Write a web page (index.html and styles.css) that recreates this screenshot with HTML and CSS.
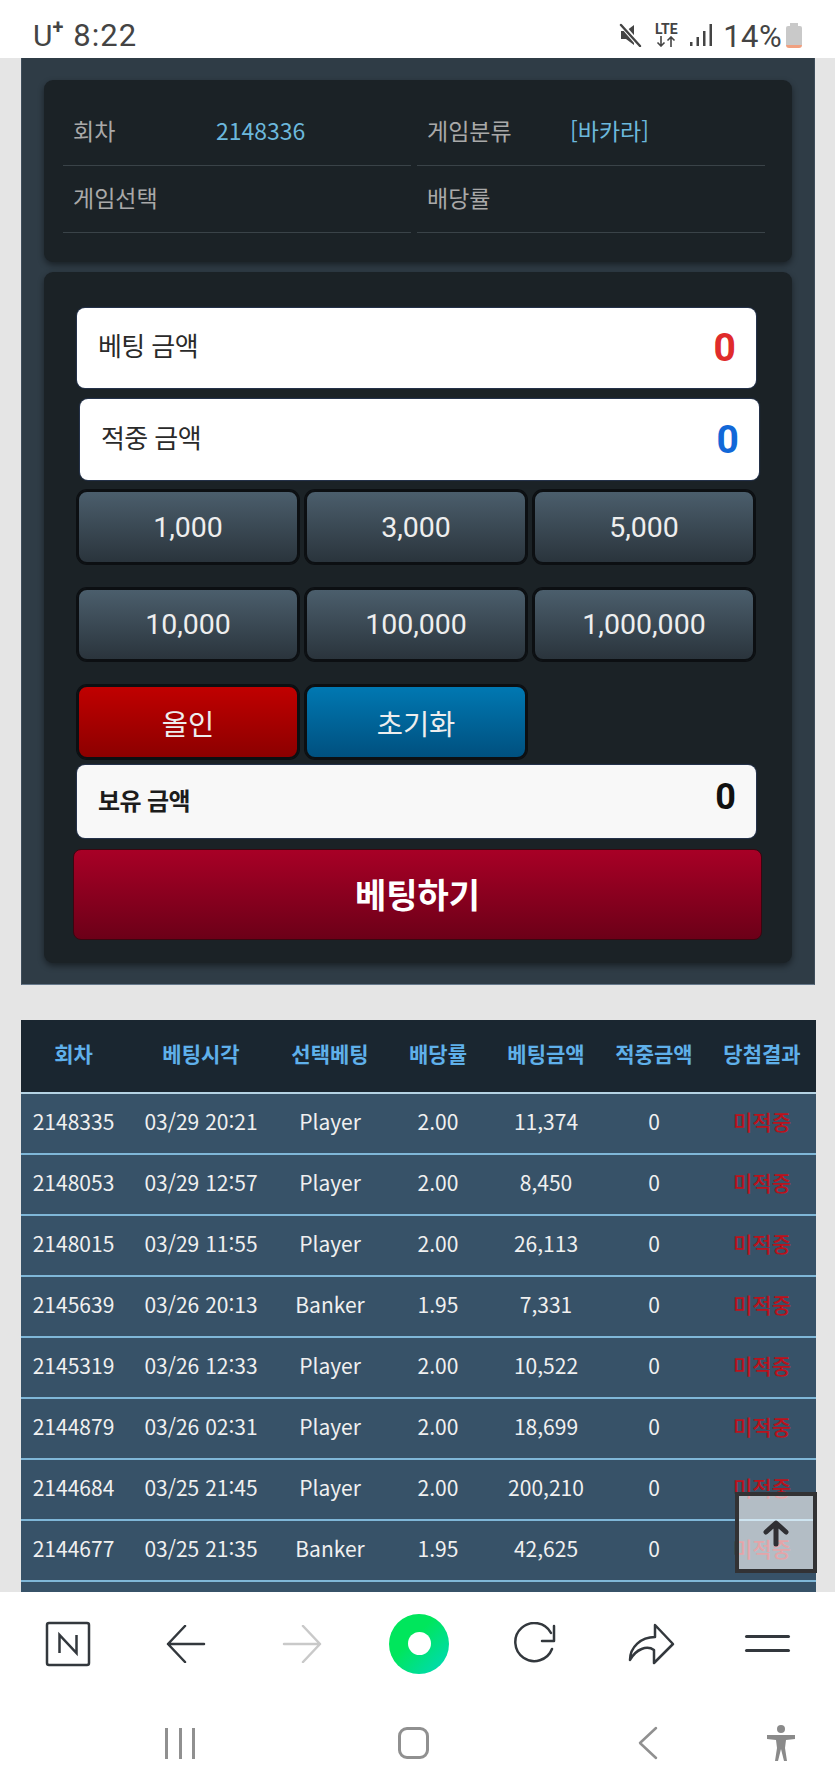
FILE: index.html
```html
<!DOCTYPE html>
<html lang="ko">
<head>
  <meta charset="UTF-8">
  <meta name="viewport" content="width=device-width, initial-scale=1.0">
  <title>베팅</title>
  <link rel="stylesheet" href="styles.css">
</head>
<body>

  <div class="status-bar">
    <div class="status-left">
      <span class="carrier">U<sup>+</sup></span>
      <span class="clock">8:22</span>
    </div>
    <div class="status-right">
      <svg class="ico-mute" width="24" height="24" viewBox="0 0 24 24">
        <path d="M3 8h5l8 -6v20l-8 -6H3z" fill="#444"/>
        <path d="M3 1l19 22" stroke="#fff" stroke-width="5"/>
        <path d="M3 2l19 21" stroke="#444" stroke-width="2.4" stroke-linecap="round"/>
      </svg>
      <div class="lte">
        <span>LTE</span>
        <svg width="20" height="11" viewBox="0 0 20 11" fill="none" stroke="#444" stroke-width="1.6">
          <path d="M5 0v10M1.500 6.500L5 10l3.500 -3.500"/>
          <path d="M15 11V1M11.500 4.500L15 1l3.500 3.500"/>
        </svg>
      </div>
      <svg class="ico-signal" width="22" height="24" viewBox="0 0 22 24" fill="#444">
        <rect x="0" y="19" width="2.500" height="4"/>
        <rect x="6.500" y="14" width="2.500" height="9"/>
        <rect x="13" y="8" width="2.500" height="15"/>
        <rect x="19.500" y="1" width="2.500" height="22"/>
      </svg>
      <span class="battery-text">14%</span>
      <div class="battery"><div class="battery-cap"></div><div class="battery-body"></div></div>
    </div>
  </div>

  <div class="page">
    <div class="panel">
      <div class="box info-box">
        <div class="info-row">
          <div class="info-cell"><span class="info-label">회차</span><span class="info-value">2148336</span></div>
          <div class="info-cell"><span class="info-label">게임분류</span><span class="info-value">[바카라]</span></div>
        </div>
        <div class="info-row">
          <div class="info-cell"><span class="info-label">게임선택</span></div>
          <div class="info-cell"><span class="info-label">배당률</span></div>
        </div>
      </div>

      <div class="box bet-box">
        <div class="amount">
          <span class="amount-label">베팅 금액</span>
          <span class="amount-num red">0</span>
        </div>
        <div class="amount amount-second">
          <span class="amount-label">적중 금액</span>
          <span class="amount-num blue">0</span>
        </div>

        <div class="btn-grid">
          <button class="btn">1,000</button>
          <button class="btn">3,000</button>
          <button class="btn">5,000</button>
        </div>
        <div class="btn-grid btn-grid-mid">
          <button class="btn btn-short">10,000</button>
          <button class="btn btn-short">100,000</button>
          <button class="btn btn-short">1,000,000</button>
        </div>
        <div class="btn-grid btn-grid-last">
          <button class="btn btn-red">올인</button>
          <button class="btn btn-blue">초기화</button>
        </div>

        <div class="amount amount-hold">
          <span class="hold-label">보유 금액</span>
          <span class="hold-num">0</span>
        </div>

        <button class="bet-btn">베팅하기</button>
      </div>
    </div>

    <table class="history">
      <colgroup>
        <col class="col-round">
        <col class="col-time">
        <col class="col-std">
        <col class="col-std">
        <col class="col-std">
        <col class="col-std">
        <col class="col-std">
      </colgroup>
      <thead>
        <tr>
          <th>회차</th><th>베팅시각</th><th>선택베팅</th><th>배당률</th><th>베팅금액</th><th>적중금액</th><th>당첨결과</th>
        </tr>
      </thead>
      <tbody>
        <tr><td>2148335</td><td>03/29 20:21</td><td>Player</td><td>2.00</td><td>11,374</td><td>0</td><td class="miss">미적중</td></tr>
        <tr><td>2148053</td><td>03/29 12:57</td><td>Player</td><td>2.00</td><td>8,450</td><td>0</td><td class="miss">미적중</td></tr>
        <tr><td>2148015</td><td>03/29 11:55</td><td>Player</td><td>2.00</td><td>26,113</td><td>0</td><td class="miss">미적중</td></tr>
        <tr><td>2145639</td><td>03/26 20:13</td><td>Banker</td><td>1.95</td><td>7,331</td><td>0</td><td class="miss">미적중</td></tr>
        <tr><td>2145319</td><td>03/26 12:33</td><td>Player</td><td>2.00</td><td>10,522</td><td>0</td><td class="miss">미적중</td></tr>
        <tr><td>2144879</td><td>03/26 02:31</td><td>Player</td><td>2.00</td><td>18,699</td><td>0</td><td class="miss">미적중</td></tr>
        <tr><td>2144684</td><td>03/25 21:45</td><td>Player</td><td>2.00</td><td>200,210</td><td>0</td><td class="miss">미적중</td></tr>
        <tr><td>2144677</td><td>03/25 21:35</td><td>Banker</td><td>1.95</td><td>42,625</td><td>0</td><td class="miss">미적중</td></tr>
        <tr><td colspan="7"></td></tr>
      </tbody>
    </table>

    <div class="top-btn">
      <svg width="28" height="28" viewBox="0 0 28 28" fill="none" stroke="#2f2f33" stroke-width="5" stroke-linecap="round" stroke-linejoin="round">
        <path d="M14 25V5M4 13l10 -9 10 9"/>
      </svg>
    </div>
  </div>

  <div class="browser-bar">
    <svg width="46" height="46" viewBox="0 0 46 46" fill="none">
      <rect x="2" y="2" width="42" height="42" rx="2" stroke="#33383d" stroke-width="2.500"/>
      <path d="M14.500 32V14l17 18V14" stroke="#33383d" stroke-width="2.500"/>
    </svg>
    <svg class="tool-back" width="40" height="38" viewBox="0 0 40 38" fill="none" stroke="#33383d" stroke-width="2.500" stroke-linecap="round" stroke-linejoin="round">
      <path d="M38 19H2M19 1L2 19l17 18"/>
    </svg>
    <svg class="tool-forward" width="40" height="38" viewBox="0 0 40 38" fill="none" stroke="#c9c9c9" stroke-width="2.500" stroke-linecap="round" stroke-linejoin="round">
      <path d="M2 19h36M21 1l17 18 -17 18"/>
    </svg>
    <div class="green-dot"><div class="green-hole"></div></div>
    <svg class="tool-reload" width="44" height="44" viewBox="0 0 44 44" fill="none" stroke="#33383d" stroke-width="2.500" stroke-linecap="round" stroke-linejoin="round">
      <path d="M38 27a19 19 0 1 1 -1 -16"/>
      <path d="M40 4v15H28"/>
    </svg>
    <svg class="tool-share" width="48" height="42" viewBox="0 0 48 42" fill="none" stroke="#33383d" stroke-width="2.500" stroke-linejoin="round">
      <path d="M28 2L46 21 27 40V27C20 22 9 26 3 37 3 24 14 14 28 14z"/>
    </svg>
    <div class="menu-lines"><span></span><span></span></div>
  </div>

  <div class="nav-bar">
    <div class="nav-recent"><span></span><span></span><span></span></div>
    <div class="nav-home"></div>
    <svg class="nav-back" width="20" height="34" viewBox="0 0 20 34" fill="none" stroke="#909090" stroke-width="2.500" stroke-linecap="round" stroke-linejoin="round">
      <path d="M18 2L2 17l16 15"/>
    </svg>
    <svg class="nav-access" width="30" height="36" viewBox="0 0 30 36" fill="#8a8a8a">
      <circle cx="15" cy="4" r="4"/>
      <path d="M1 10h28v4l-9 1 -1 8 2 13h-3l-3 -12 -3 12H9l2 -13 -1 -8 -9 -1z"/>
    </svg>
  </div>

</body>
</html>
```

FILE: styles.css
```css
* {
  margin: 0;
  padding: 0;
  box-sizing: border-box;
}

body {
  width: 835px;
  height: 1791px;
  overflow: hidden;
  display: flex;
  flex-direction: column;
  background-color: #fff;
  font-family: "Noto Sans CJK KR", "Noto Sans", sans-serif;
}

/* status bar */
.status-bar {
  height: 58px;
  flex: none;
  display: flex;
  justify-content: space-between;
  padding: 20px 33px 0 33px;
  background-color: #fff;
  color: #444;
  font-family: Roboto, sans-serif;
}

.status-left {
  display: flex;
  align-items: flex-start;
  gap: 10px;
}

.carrier {
  font-size: 30px;
  line-height: 32px;
}

.carrier sup {
  font-size: 20px;
  font-weight: 700;
  line-height: 0;
  vertical-align: 12px;
}

.clock {
  font-size: 31px;
  line-height: 32px;
  letter-spacing: 1px;
}

.status-right {
  display: flex;
  align-items: flex-start;
  padding-top: 3px;
}

.ico-mute {
  margin-right: 12px;
}

.lte {
  width: 24px;
  margin-right: 12px;
  display: flex;
  flex-direction: column;
  align-items: center;
  font-size: 14px;
  font-weight: 700;
  line-height: 13px;
}

.ico-signal {
  margin-right: 11px;
}

.battery-text {
  font-size: 31px;
  line-height: 27px;
  letter-spacing: 0.4px;
  margin-right: 4px;
}

.battery {
  width: 16px;
  display: flex;
  flex-direction: column;
  align-items: center;
}

.battery-cap {
  width: 8px;
  height: 3px;
  background-color: #c9c9c9;
}

.battery-body {
  width: 16px;
  height: 22px;
  border-radius: 2px 2px 3px 3px;
  background: linear-gradient(#c9c9c9 86%, #f0a080 86%);
}

/* scrolling page */
.page {
  position: relative;
  height: 1534px;
  flex: none;
  overflow: hidden;
  padding: 0 20px 0 21px;
  background-color: #e5e5e5;
}

.panel {
  height: 927px;
  padding: 22px 22px 0;
  background-color: #2f3c46;
  border-bottom: 1px solid #66788a;
  border-left: 1px solid #3e4d5a;
  border-right: 1px solid #3e4d5a;
}

.box {
  background-color: #1b2226;
  border-radius: 9px;
  box-shadow: 0 3px 6px rgba(0, 0, 0, 0.45);
}

.info-box {
  height: 182px;
  padding: 19px 27px 0 19px;
  margin-bottom: 10px;
}

.info-row {
  display: flex;
  gap: 6px;
}

.info-cell {
  width: 348px;
  height: 67px;
  display: flex;
  align-items: center;
  padding: 0 0 4px 10px;
  border-bottom: 1px solid #3a4348;
  font-size: 23px;
  line-height: 32px;
}

.info-label {
  width: 143px;
  color: #a9a9a9;
}

.info-value {
  color: #6cb8dc;
}

.bet-box {
  height: 691px;
  padding: 36px 36px 0 33px;
}

.amount {
  width: 679px;
  height: 80px;
  display: flex;
  justify-content: space-between;
  align-items: center;
  padding: 0 20px 0 21px;
  background-color: #fff;
  border-radius: 8px;
  box-shadow: 0 0 1px 1px #26344e;
}

.amount-second {
  margin: 11px 0 10px 3px;
  height: 81px;
}

.amount-label {
  font-size: 26px;
  line-height: 36px;
  letter-spacing: -0.6px;
  color: #2a2a2a;
  margin-top: -6px;
}

.amount-num {
  font-family: Roboto, sans-serif;
  font-size: 39px;
  font-weight: 700;
  line-height: 46px;
}

.red {
  color: #e02b2b;
}

.blue {
  color: #1268d8;
}

.btn-grid {
  display: grid;
  grid-template-columns: repeat(3, 222px);
  gap: 6px;
  margin-bottom: 24px;
}

.btn-grid-mid {
  margin-bottom: 24px;
}

.btn-grid-last {
  margin-bottom: 6px;
}

.btn {
  height: 74px;
  border: 2px solid #0c0f12;
  border-radius: 10px;
  box-shadow: 0 0 0 1px #0c0f12;
  background: linear-gradient(#4b5e6c, #2a343c);
  color: #eee;
  font-family: Roboto, "Noto Sans CJK KR", sans-serif;
  font-size: 28.500px;
}

.btn-short {
  height: 73px;
}

.btn-red {
  background: linear-gradient(#c00000, #8c0000);
}

.btn-blue {
  background: linear-gradient(#0078b2, #00507f);
}

.amount-hold {
  height: 73px;
  background-color: #f8f8f8;
}

.hold-label {
  font-size: 24px;
  font-weight: 700;
  line-height: 34px;
  letter-spacing: -0.6px;
  color: #1c1c1c;
  margin-top: -4px;
}

.hold-num {
  font-family: Roboto, sans-serif;
  font-size: 36px;
  font-weight: 700;
  line-height: 44px;
  color: #111;
  margin-top: -9px;
}

.bet-btn {
  display: block;
  width: 689px;
  height: 91px;
  margin: 11px 0 0 -4px;
  padding-bottom: 3px;
  border: 1px solid #3a0610;
  border-radius: 8px;
  background: linear-gradient(#a80026, #6c0018);
  color: #fff;
  font-family: "Noto Sans CJK KR", sans-serif;
  font-size: 34px;
  font-weight: 700;
}

/* history table */
.history {
  width: 794px;
  margin-top: 35px;
  table-layout: fixed;
  border-collapse: collapse;
  background-color: #375268;
}

.col-round {
  width: 105px;
}

.col-time {
  width: 150px;
}

.col-std {
  width: 108px;
}

.history thead tr {
  height: 73px;
  background-color: #1a2630;
}

.history th {
  padding-bottom: 6px;
  font-size: 21px;
  font-weight: 700;
  color: #5fb0ea;
  border-bottom: 2px solid #b5d3e4;
}

.history tbody tr {
  height: 61px;
  border-bottom: 2px solid #7fb7d8;
}

.history td {
  padding-bottom: 6px;
  text-align: center;
  font-size: 21px;
  color: #f0f0f0;
}

.history td.miss {
  font-weight: 500;
  color: #b9121c;
}

.top-btn {
  position: absolute;
  left: 735px;
  top: 1434px;
  width: 82px;
  height: 81px;
  display: flex;
  justify-content: center;
  align-items: center;
  border: 4px solid #323234;
  background-color: rgba(255, 255, 255, 0.62);
}

/* browser toolbar and android nav */
.browser-bar {
  height: 103px;
  flex: none;
  display: flex;
  align-items: center;
  padding-left: 45px;
  background-color: #fff;
}

.tool-back {
  margin-left: 75px;
}

.tool-forward {
  margin-left: 76px;
}

.green-dot {
  width: 60px;
  height: 60px;
  margin-left: 67px;
  display: flex;
  align-items: center;
  justify-content: center;
  border-radius: 50%;
  background: linear-gradient(135deg, #00e65c 40%, #00d8c0);
}

.green-hole {
  width: 23px;
  height: 23px;
  border-radius: 50%;
  background-color: #fff;
}

.tool-reload {
  margin-left: 65px;
}

.tool-share {
  margin-left: 69px;
}

.menu-lines {
  width: 45px;
  margin-left: 70px;
  display: flex;
  flex-direction: column;
  gap: 11px;
}

.menu-lines span {
  height: 3px;
  border-radius: 2px;
  background-color: #33383d;
}

.nav-bar {
  height: 96px;
  flex: none;
  display: flex;
  align-items: center;
  padding-left: 165px;
  background-color: #fff;
}

.nav-recent {
  width: 30px;
  display: flex;
  justify-content: space-between;
}

.nav-recent span {
  width: 3px;
  height: 31px;
  background-color: #909090;
}

.nav-home {
  width: 31px;
  height: 32px;
  margin-left: 203px;
  border: 3px solid #909090;
  border-radius: 9px;
}

.nav-back {
  margin-left: 209px;
}

.nav-access {
  margin-left: 108px;
}
```
